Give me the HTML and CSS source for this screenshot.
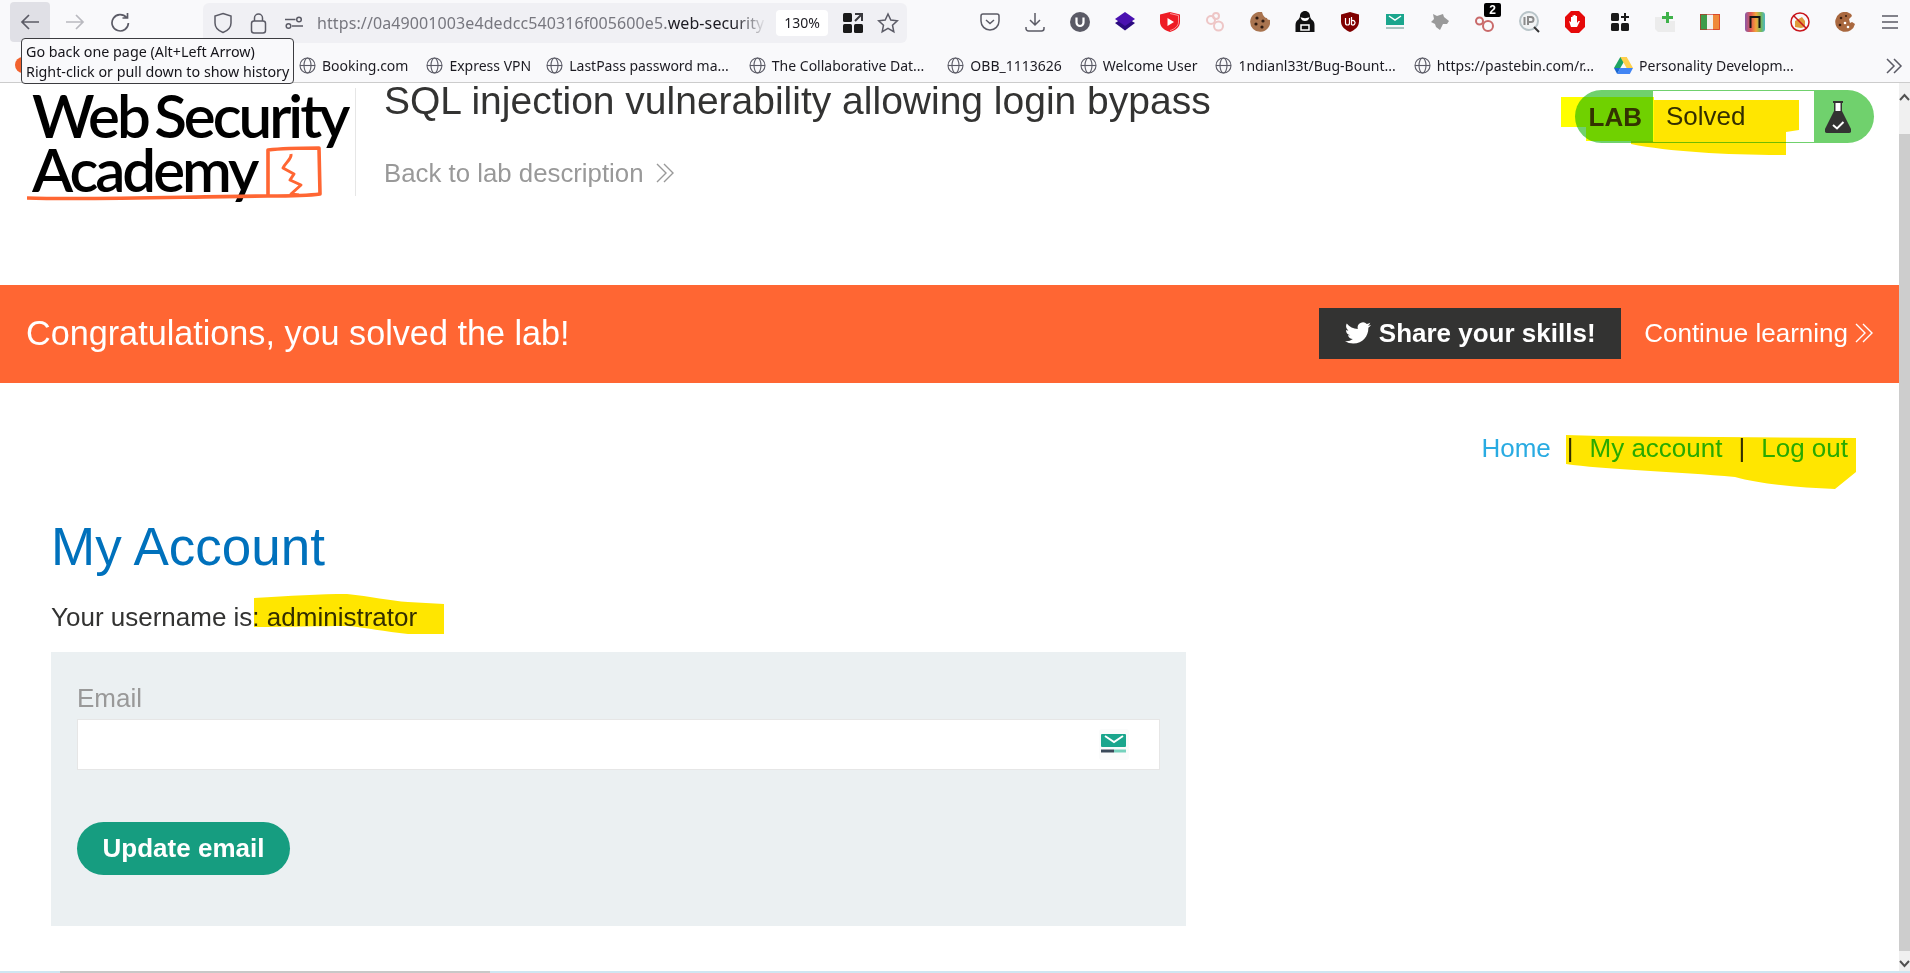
FILE: index.html
```html
<!DOCTYPE html>
<html lang="en">
<head>
<meta charset="utf-8">
<title>SQL injection vulnerability allowing login bypass</title>
<link rel="stylesheet" href="styles.css">
</head>
<body>
<header class="browser">
  <div class="toolbar">
    <div class="nav-buttons">
      <button class="tb-btn tb-active"><svg width="20" height="20" viewBox="0 0 20 20" class="ic-line"><path d="M19 10H2M9 3l-7 7 7 7"/></svg></button>
      <button class="tb-btn tb-dim"><svg width="20" height="20" viewBox="0 0 20 20" class="ic-line"><path d="M1 10h17M11 3l7 7-7 7"/></svg></button>
      <button class="tb-btn"><svg width="20" height="20" viewBox="0 0 20 20" class="ic-line"><path d="M16.5 5.5A8.2 8.2 0 1 0 18.4 11M17.500 1v5h-5"/></svg></button>
    </div>
    <div class="urlbar">
      <svg width="20" height="22" viewBox="0 0 20 22" class="ic-line ic-thin"><path d="M10 1.500l8 2.500v7c0 5-4 8-8 9.500-4-1.500-8-4.500-8-9.500V4z"/></svg>
      <svg width="17" height="22" viewBox="0 0 17 22" class="ic-line ic-thin"><rect x="1.500" y="9" width="14" height="12" rx="2.500"/><path d="M4.500 9V6a4 4 0 0 1 8 0v3"/></svg>
      <svg width="18" height="14" viewBox="0 0 18 14" class="ic-line ic-thin"><circle cx="3.500" cy="10" r="2.300"/><circle cx="14" cy="3.500" r="2.300"/><path d="M0 3.500h10.500M7 10h11"/></svg>
      <div class="url"><span>https://0a49001003e4dedcc540316f005600e5.</span><b>web-security</b></div>
      <span class="zoom-badge">130%</span>
      <svg width="20" height="20" viewBox="0 0 20 20" class="ic-fill"><rect x="0" y="0" width="9" height="9" rx="1.500"/><rect x="0" y="11" width="9" height="9" rx="1.500"/><rect x="11" y="11" width="9" height="9" rx="1.500"/><path d="M12 1h7v7M19 1l-7 7" fill="none" stroke="#3a3a3f" stroke-width="2"/></svg>
      <svg width="22" height="22" viewBox="0 0 22 22" class="ic-line ic-thin"><path d="M11 2l2.800 6 6.500.8-4.800 4.400 1.300 6.500-5.800-3.300-5.800 3.300 1.300-6.500L1.700 8.800 8.200 8z"/></svg>
    </div>
    <div class="extensions">
      <span class="ext"><svg width="20" height="20" viewBox="0 0 20 20" class="ic-line ic-thin"><path d="M3 2h14a2 2 0 0 1 2 2v5a9 9 0 0 1-18 0V4a2 2 0 0 1 2-2z"/><path d="M6 8l4 3.500L14 8"/></svg></span>
      <span class="ext"><svg width="20" height="20" viewBox="0 0 20 20" class="ic-line ic-thin"><path d="M10 1v12M5 8l5 5 5-5M1 15v1.500A2.500 2.500 0 0 0 3.500 19h13a2.500 2.500 0 0 0 2.500-2.500V15"/></svg></span>
      <span class="ext"><svg width="20" height="20" viewBox="0 0 20 20"><circle cx="10" cy="10" r="10" fill="#5b5b66"/><path d="M6.500 5.500v5a3.500 3.500 0 0 0 7 0v-5" fill="none" stroke="#fff" stroke-width="2.200"/></svg></span>
      <span class="ext"><svg width="20" height="20" viewBox="0 0 20 20"><path d="M10 5l10 6-10 7.500L0 11z" fill="#2b0a80"/><path d="M10 0l10 7-10 7L0 7z" fill="#4a12b0"/></svg></span>
      <span class="ext"><svg width="20" height="20" viewBox="0 0 20 20"><path d="M10 0l10 2.500v7.500c0 5-4.500 8.500-10 10C4.500 18.500 0 15 0 10V2.500z" fill="#ee1c25"/><path d="M10 1.500l8.500 2v6.500c0 4-3.800 7.200-8.500 8.500" fill="none" stroke="#ffb3b3" stroke-width=".8"/><path d="M7.500 6l6.500 4-6.500 4z" fill="#fff"/></svg></span>
      <span class="ext"><svg width="20" height="20" viewBox="0 0 20 20" fill="none" stroke="#eec6c6" stroke-width="2"><circle cx="6" cy="8" r="4"/><circle cx="11" cy="4" r="3"/><circle cx="13.500" cy="14" r="4.500"/></svg></span>
      <span class="ext"><svg width="20" height="20" viewBox="0 0 20 20"><path d="M12 0a10 10 0 1 0 8 8c-2 0-3-1-3-2-2 0-4-2-5-6z" fill="#a9744f"/><circle cx="7" cy="6" r="1.600" fill="#2d1a10"/><circle cx="13" cy="9" r="1.600" fill="#2d1a10"/><circle cx="6" cy="12" r="1.600" fill="#2d1a10"/><circle cx="12" cy="15" r="1.600" fill="#2d1a10"/></svg></span>
      <span class="ext"><svg width="20" height="22" viewBox="0 0 20 22"><path d="M10 0c3 0 5 2.500 5 5 0 1.500 1 2.500 1.500 3.500 2 1 3 3 3 5.500v7H.5v-7c0-2.500 1-4.500 3-5.500C4 7.500 5 6.500 5 5c0-2.500 2-5 5-5z" fill="#111"/><path d="M5.500 6c2 1.500 7 1.500 9 0-1 3-2 4-4.500 4S6.500 9 5.500 6z" fill="#fff"/><path d="M6 14h8v5H6z" fill="none" stroke="#fff" stroke-width="1.500"/></svg></span>
      <span class="ext"><svg width="18" height="20" viewBox="0 0 18 20"><path d="M9 0l9 2.500v7c0 5-4 8.500-9 10.500C4 18 0 14.500 0 9.500v-7z" fill="#800000"/><path d="M4.500 6v5a2 2 0 0 0 4 0V6M10.500 5v8M10.500 9a2.200 2.200 0 1 1 0 3.500" fill="none" stroke="#fff" stroke-width="1.200"/></svg></span>
      <span class="ext"><svg width="18" height="20" viewBox="0 0 18 20"><rect y="2" width="18" height="11" fill="#1ba68d"/><path d="M3 4l6 4 6-4" fill="none" stroke="#fff" stroke-width="1.500"/><rect y="15" width="18" height="2" fill="#a9c4c0"/></svg></span>
      <span class="ext"><svg width="20" height="20" viewBox="0 0 20 20"><path d="M3 2l4 2 6-2 1 3 5 4-2 3h-4l-3 6-4-3-1-3-4-2 3-3z" fill="#9a9a9a"/></svg></span>
      <span class="ext ext-badged"><svg width="20" height="20" viewBox="0 0 20 20" fill="none" stroke="#c96a6a" stroke-width="2"><circle cx="4.500" cy="9" r="3.500"/><circle cx="13" cy="14" r="5"/></svg><span class="badge">2</span></span>
      <span class="ext"><svg width="22" height="22" viewBox="0 0 22 22"><circle cx="10" cy="10" r="9" fill="#f1f3f4" stroke="#b8c4c8" stroke-width="2"/><path d="M15 16l5 5" stroke="#333" stroke-width="2"/><path d="M5.500 6v8M9 14V6h3a2.500 2.500 0 0 1 0 5H9" fill="none" stroke="#8a8a8a" stroke-width="2"/></svg></span>
      <span class="ext"><svg width="20" height="22" viewBox="0 0 20 22"><path d="M6 0h8l6 6v10l-6 6H6l-6-6V6z" fill="#e60a0a"/><path d="M6 16l-2-6 2 1V6h1.500v4V4.500H9V10V4h1.500v6V5H12v7l1.500-2H15l-3 6z" fill="#fff"/></svg></span>
      <span class="ext"><svg width="18" height="18" viewBox="0 0 18 18" fill="#1a1a1a"><rect width="8" height="8" rx="1.500"/><rect y="10" width="8" height="8" rx="1.500"/><rect x="10" y="10" width="8" height="8" rx="1.500"/><path d="M13 0h2v3h3v2h-3v3h-2V5h-3V3h3z"/></svg></span>
      <span class="ext"><svg width="20" height="20" viewBox="0 0 20 20"><path d="M0 5h12v4h8v11H3l-3-3z" fill="#ececec"/><path d="M11 0h3v4h4v3h-4v4h-3V7H7V4h4z" fill="#3fb24a"/></svg></span>
      <span class="ext"><svg width="20" height="16" viewBox="0 0 20 16"><rect width="7" height="16" fill="#3e9c4a"/><rect x="7" width="6" height="16" fill="#f2f2ee"/><rect x="13" width="7" height="16" fill="#ef8a3a"/><rect x=".5" y=".5" width="19" height="15" fill="none" stroke="#c22" stroke-width=".6"/></svg></span>
      <span class="ext"><svg width="20" height="20" viewBox="0 0 20 20"><rect width="20" height="20" rx="3" fill="url(#rainbow)"/><defs><linearGradient id="rainbow"><stop offset="0" stop-color="#8c5aa8"/><stop offset=".3" stop-color="#e0574f"/><stop offset=".55" stop-color="#f2a53a"/><stop offset=".8" stop-color="#74b95a"/><stop offset="1" stop-color="#4db6c6"/></linearGradient></defs><path d="M5.500 16V5h9v11" fill="none" stroke="#141414" stroke-width="2"/></svg></span>
      <span class="ext"><svg width="20" height="20" viewBox="0 0 20 20"><path d="M5 9l7-4 3 4v6l-4 1-6-1z" fill="#e09a3c"/><circle cx="10" cy="10" r="9" fill="none" stroke="#c8151b" stroke-width="1.500"/><path d="M3.500 3.500l13 13" stroke="#c8151b" stroke-width="1.500"/></svg></span>
      <span class="ext"><svg width="20" height="20" viewBox="0 0 20 20"><path d="M12 0a10 10 0 1 0 8 12l-3-2-2 1-1-4 3-3-1-2z" fill="#a9683f"/><circle cx="6" cy="6" r="1.300" fill="#3a1d0d"/><circle cx="11" cy="4" r="1" fill="#3a1d0d"/><circle cx="5" cy="13" r="1.300" fill="#3a1d0d"/><circle cx="10" cy="11" r="1.300" fill="#fff"/><circle cx="13" cy="15" r="1.300" fill="#fff"/></svg></span>
      <span class="ext"><svg width="18" height="14" viewBox="0 0 18 14" class="ic-line"><path d="M1 1h16M1 7h16M1 13h16"/></svg></span>
    </div>
  </div>
  <div class="bookmarks">
    <span class="firefox-dot"></span>
    <a class="bm bm-first"><svg width="17" height="17" viewBox="0 0 17 17" class="globe"><circle cx="8.500" cy="8.500" r="7.500"/><ellipse cx="8.500" cy="8.500" rx="3.500" ry="7.500"/><path d="M1 8.500h15"/></svg>Booking.com</a>
    <a class="bm bm-tight"><svg width="17" height="17" viewBox="0 0 17 17" class="globe"><circle cx="8.500" cy="8.500" r="7.500"/><ellipse cx="8.500" cy="8.500" rx="3.500" ry="7.500"/><path d="M1 8.500h15"/></svg>Express VPN</a>
    <a class="bm bm-loose"><svg width="17" height="17" viewBox="0 0 17 17" class="globe"><circle cx="8.500" cy="8.500" r="7.500"/><ellipse cx="8.500" cy="8.500" rx="3.500" ry="7.500"/><path d="M1 8.500h15"/></svg>LastPass password ma...</a>
    <a class="bm bm-wide"><svg width="17" height="17" viewBox="0 0 17 17" class="globe"><circle cx="8.500" cy="8.500" r="7.500"/><ellipse cx="8.500" cy="8.500" rx="3.500" ry="7.500"/><path d="M1 8.500h15"/></svg>The Collaborative Dat...</a>
    <a class="bm"><svg width="17" height="17" viewBox="0 0 17 17" class="globe"><circle cx="8.500" cy="8.500" r="7.500"/><ellipse cx="8.500" cy="8.500" rx="3.500" ry="7.500"/><path d="M1 8.500h15"/></svg>OBB_1113626</a>
    <a class="bm"><svg width="17" height="17" viewBox="0 0 17 17" class="globe"><circle cx="8.500" cy="8.500" r="7.500"/><ellipse cx="8.500" cy="8.500" rx="3.500" ry="7.500"/><path d="M1 8.500h15"/></svg>Welcome User</a>
    <a class="bm"><svg width="17" height="17" viewBox="0 0 17 17" class="globe"><circle cx="8.500" cy="8.500" r="7.500"/><ellipse cx="8.500" cy="8.500" rx="3.500" ry="7.500"/><path d="M1 8.500h15"/></svg>1ndianl33t/Bug-Bount...</a>
    <a class="bm bm-loose"><svg width="17" height="17" viewBox="0 0 17 17" class="globe"><circle cx="8.500" cy="8.500" r="7.500"/><ellipse cx="8.500" cy="8.500" rx="3.500" ry="7.500"/><path d="M1 8.500h15"/></svg>https://pastebin.com/r...</a>
    <a class="bm"><svg width="19" height="17" viewBox="0 0 19 17"><path d="M6.300 0h6.400L6.300 11H0z" fill="#1fa463"/><path d="M12.700 0L19 11h-6.400L6.300 0z" fill="#ffd04b"/><path d="M3.200 17L6.300 11H19l-3.200 6z" fill="#4285f4"/><path d="M0 11h6.300L3.200 17z" fill="#1967d2"/></svg>Personality Developm...</a>
    <svg class="bm-more" width="18" height="16" viewBox="0 0 18 16" fill="none" stroke="#5b5b66" stroke-width="1.500"><path d="M2 1l7 7-7 7M9 1l7 7-7 7"/></svg>
  </div>
  <div class="tooltip">Go back one page (Alt+Left Arrow)<br>Right-click or pull down to show history</div>
</header>

<div class="viewport">
  <div class="page">
    <section class="lab-header">
      <div class="logo">
        <span class="logo-line">Web Security</span>
        <span class="logo-line">Academy</span>
        <svg class="logo-mark" width="296" height="56" viewBox="0 0 296 56" fill="none" stroke="#ff6633" stroke-linejoin="round"><path d="M0 52c60 2 150-1 241-2V4c17-2 34-2 51-2l1 46c-14 2-36 2-52 2" stroke-width="3.600"/><path d="M264 8c1 5-6 9-8 14l11 6-4 6 11 5-10 9 8 1" stroke-width="3"/></svg>
      </div>
      <div class="lab-title">
        <h2 class="lab-name">SQL injection vulnerability allowing login bypass</h2>
        <a class="lab-back">Back to lab description <svg width="20" height="20" viewBox="0 0 20 20" fill="none" stroke="#999" stroke-width="1.400"><path d="M2 1l9 9-9 9M9 1l9 9-9 9"/></svg></a>
      </div>
      <div class="lab-status">
        <span class="lab-tag">LAB</span>
        <span class="lab-state">Solved</span>
        <span class="lab-flask"><svg width="26" height="32" viewBox="0 0 26 32"><path d="M8 0h10v2h-1v8l9 18a2.500 2.500 0 0 1-2 4H2a2.500 2.500 0 0 1-2-4l9-18V2H8z" fill="#333332"/><rect x="10.500" y="2" width="5" height="8" fill="#fff"/><path d="M8 24l4 3.500L18.500 21" fill="none" stroke="#fff" stroke-width="2"/></svg></span>
      </div>
    </section>

    <section class="banner">
      <h4 class="banner-text">Congratulations, you solved the lab!</h4>
      <a class="share"><svg width="26" height="26" viewBox="0 0 24 24" fill="#fff"><path d="M23.953 4.570a10 10 0 0 1-2.825.775 4.958 4.958 0 0 0 2.163-2.723c-.951.555-2.005.959-3.127 1.184a4.920 4.920 0 0 0-8.384 4.482C7.690 8.095 4.067 6.130 1.640 3.162a4.822 4.822 0 0 0-.666 2.475c0 1.710.870 3.213 2.188 4.096a4.904 4.904 0 0 1-2.228-.616v.060a4.923 4.923 0 0 0 3.946 4.827 4.996 4.996 0 0 1-2.212.085 4.936 4.936 0 0 0 4.604 3.417 9.867 9.867 0 0 1-6.102 2.105c-.390 0-.779-.023-1.170-.067a13.995 13.995 0 0 0 7.557 2.209c9.053 0 13.998-7.496 13.998-13.985 0-.210 0-.420-.015-.630A9.935 9.935 0 0 0 24 4.590z"/></svg>Share your skills!</a>
      <a class="continue">Continue learning <svg width="20" height="20" viewBox="0 0 20 20" fill="none" stroke="#fff" stroke-width="1.400"><path d="M2 1l9 9-9 9M9 1l9 9-9 9"/></svg></a>
    </section>

    <nav class="site-nav">
      <a class="link">Home</a><span class="sep">|</span><a class="link link-marked">My account</a><span class="sep">|</span><a class="link link-marked">Log out</a>
    </nav>

    <main class="content">
      <h1 class="heading">My Account</h1>
      <p class="username">Your username is: administrator</p>
      <form class="email-form">
        <label class="email-label">Email</label>
        <div class="email-input">
          <span class="tempmail"><svg width="26" height="21" viewBox="0 0 26 21"><rect width="25" height="13" rx="1" fill="#1ba68d"/><path d="M4 2l9 6 9-6" fill="none" stroke="#fff" stroke-width="2"/><rect y="15.500" width="13" height="3" fill="#3a4a5a"/><rect x="13" y="15.500" width="12" height="3" fill="#76d2bd"/></svg></span>
        </div>
        <button type="button" class="update">Update email</button>
      </form>
    </main>
  </div>
  <aside class="scrollbar">
    <svg class="sb-arrow" width="11" height="8" viewBox="0 0 11 8" fill="none" stroke="#505050" stroke-width="2"><path d="M1 7l4.500-5L10 7"/></svg>
    <div class="sb-thumb"></div>
    <svg class="sb-arrow" width="11" height="8" viewBox="0 0 11 8" fill="none" stroke="#505050" stroke-width="2"><path d="M1 1l4.500 5L10 1"/></svg>
  </aside>
</div>
<div class="bottom-strip"><span class="bottom-grey"></span></div>

<svg class="marks" width="1910" height="973" viewBox="0 0 1910 973">
  <path class="mark-lime" d="M1561 97H1654V141H1586V127H1561Z"/>
  <path class="mark" d="M1654 100H1799V130L1786 132V155C1730 155 1670 152 1631 144V141H1654Z"/>
  <path class="mark" d="M1566 435L1600 436 1856 438V472L1835 489C1800 488 1760 484 1735 477 1680 472 1600 469 1566 464Z"/>
  <path class="mark" d="M254 598C290 596 320 594 347 594 370 596 390 601 408 602L444 604V634H408C385 632 365 627 347 626 320 626 290 627 254 627Z"/>
</svg>
</body>
</html>
```

FILE: styles.css
```css
* { box-sizing: border-box; }
html, body { margin: 0; height: 100%; }
body {
  width: 1910px;
  height: 973px;
  overflow: hidden;
  display: flex;
  flex-direction: column;
  position: relative;
  background: #fff;
  color: #333332;
  font-family: "Liberation Sans", Arial, sans-serif;
}

/* Browser chrome */
.browser {
  flex: none;
  height: 83px;
  background: #f9f9fb;
  border-bottom: 1px solid #ccc;
  position: relative;
  font-family: "Noto Sans", sans-serif;
}
.toolbar {
  height: 44px;
  display: flex;
  align-items: flex-start;
  padding: 2px 0 0 10px;
}
.nav-buttons { display: flex; gap: 5px; width: 193px; flex: none; }
.tb-btn {
  width: 40px;
  height: 40px;
  border: 0;
  border-radius: 4px;
  padding: 0;
  background: none;
  display: flex;
  align-items: center;
  justify-content: center;
}
.tb-active { background: #e0e0e6; }
.tb-dim svg { opacity: .4; }
.ic-line { fill: none; stroke: #5b5b66; stroke-width: 1.700; flex: none; }
.ic-thin { stroke-width: 1.500; }
.ic-fill { fill: #1a1a1a; flex: none; }

.urlbar {
  flex: none;
  width: 704px;
  height: 40px;
  margin-top: 1px;
  background: #f0f0f4;
  border-radius: 6px;
  display: flex;
  align-items: center;
  padding-left: 10px;
}
.urlbar svg:nth-child(2) { margin-left: 17px; }
.urlbar svg:nth-child(3) { margin-left: 18px; }
.url {
  width: 449px;
  margin-left: 14px;
  overflow: hidden;
  white-space: nowrap;
  font-size: 16px;
  color: #77777f;
  letter-spacing: .1px;
  -webkit-mask-image: linear-gradient(90deg, #000 93%, transparent);
  mask-image: linear-gradient(90deg, #000 93%, transparent);
}
.url b { font-weight: 400; color: #1c1b22; }
.zoom-badge {
  width: 52px;
  height: 26px;
  margin: 0 15px 0 10px;
  background: #fff;
  border-radius: 4px;
  font-size: 14px;
  line-height: 26px;
  text-align: center;
  color: #1c1b22;
}
.urlbar .ic-fill + svg { margin-left: 14px; }

.extensions {
  flex: none;
  margin-left: 60px;
  display: flex;
  align-items: center;
  height: 40px;
}
.ext {
  width: 45px;
  height: 40px;
  flex: none;
  display: flex;
  align-items: center;
  justify-content: center;
  position: relative;
}
.badge {
  position: absolute;
  top: 1px;
  left: 22px;
  width: 17px;
  height: 14px;
  background: #000;
  border-radius: 2px;
  color: #fff;
  font: 700 12px/14px "Liberation Sans", sans-serif;
  text-align: center;
}

.bookmarks {
  height: 38px;
  padding-top: 4px;
  display: flex;
  align-items: center;
  font-size: 14px;
  color: #1c1b22;
  padding-left: 15px;
  position: relative;
}
.firefox-dot {
  width: 16px;
  height: 16px;
  border-radius: 50%;
  background: #f2622e;
  flex: none;
}
.bm {
  display: flex;
  align-items: center;
  gap: 6px;
  white-space: nowrap;
  margin-right: 18px;
  flex: none;
}
.bm-first { margin-left: 268px; }
.bm-tight { margin-right: 15px; }
.bm-loose { margin-right: 20px; }
.bm-wide { margin-right: 23px; }
.globe { fill: none; stroke: #5b5b66; stroke-width: 1.100; flex: none; }
.bm-more { position: absolute; right: 7px; top: 14px; }

.tooltip {
  position: absolute;
  left: 21px;
  top: 38px;
  width: 273px;
  height: 46px;
  padding: 3px 4px 0;
  background: #f9f9fb;
  border: 1px solid #3c3c40;
  border-radius: 4px;
  font-size: 14.300px;
  line-height: 20px;
  color: #15141a;
  white-space: nowrap;
  z-index: 5;
}

/* Page */
.viewport { flex: 1; display: flex; min-height: 0; }
.page { flex: 1; min-width: 0; }

.lab-header {
  height: 202px;
  display: flex;
  align-items: flex-start;
  padding-left: 29px;
}
.logo {
  width: 327px;
  height: 108px;
  margin-top: 5px;
  border-right: 1px solid #e6e6e6;
  position: relative;
  font-family: Lato, sans-serif;
  font-size: 60px;
  font-weight: 600;
  letter-spacing: -3px;
  word-spacing: -5.500px;
  line-height: 54px;
  color: #000;
}
.logo-line { display: block; white-space: nowrap; padding-left: 3px; }
.logo-mark { position: absolute; left: -2px; top: 58px; }

.lab-title { margin-left: 28px; flex: 1; }
.lab-name {
  margin: 0;
  font-size: 39px;
  font-weight: 400;
  line-height: 36px;
  color: #333332;
}
.lab-back {
  display: flex;
  align-items: center;
  gap: 11px;
  margin-top: 35px;
  font-size: 25.800px;
  line-height: 38px;
  color: #999;
}
.lab-status {
  flex: none;
  width: 299px;
  height: 53px;
  margin: 7px 25px 0 0;
  padding: 1px 0;
  background: #70d16d;
  border-radius: 27px;
  display: flex;
  overflow: hidden;
}
.lab-tag {
  width: 78px;
  font-size: 26px;
  font-weight: 700;
  line-height: 53px;
  text-align: right;
  padding-right: 11px;
  color: #333332;
}
.lab-state {
  width: 161px;
  background: #fff;
  font-size: 26px;
  line-height: 51px;
  padding-left: 13px;
  color: #333332;
}
.lab-flask { flex: 1; display: flex; align-items: center; justify-content: center; padding-right: 12px; }

.banner {
  height: 98px;
  display: flex;
  align-items: center;
  background: #ff6633;
  color: #fff;
  padding: 0 0 2px 26px;
}
.banner-text {
  margin: 0;
  flex: 1;
  font-size: 34.200px;
  font-weight: 400;
}
.share {
  width: 302px;
  height: 51px;
  display: flex;
  align-items: center;
  justify-content: center;
  gap: 8px;
  background: #333332;
  font-size: 26px;
  font-weight: 700;
}
.continue {
  display: flex;
  align-items: center;
  gap: 6px;
  margin: 0 25px 0 23px;
  font-size: 26px;
}

.site-nav {
  height: 133px;
  padding: 50px 51px 0 0;
  display: flex;
  justify-content: flex-end;
  font-size: 26px;
  line-height: 30px;
}
.link { color: #29abe2; }
.link-marked { color: #29bde2; }
.sep { margin: 0 16px; color: #333332; }

.content { padding-left: 51px; width: 1186px; }
.heading {
  margin: 0;
  font-size: 53px;
  font-weight: 400;
  line-height: 62px;
  color: #0071bc;
}
.username {
  margin: 24px 0 0;
  font-size: 26px;
  line-height: 30px;
}
.email-form {
  margin-top: 20px;
  height: 274px;
  padding: 31px 26px 0;
  background: #ebf0f2;
  display: flex;
  flex-direction: column;
  align-items: flex-start;
}
.email-label {
  font-size: 26px;
  line-height: 30px;
  color: #999;
}
.email-input {
  width: 100%;
  height: 51px;
  margin-top: 6px;
  background: #fff;
  border: 1px solid #e6e6e6;
  display: flex;
  align-items: center;
  justify-content: flex-end;
  padding-right: 30px;
}
.tempmail {
  display: flex;
  padding: 5px 2px;
  background: #fafbfb;
  border-radius: 3px;
}
.update {
  width: 213px;
  height: 53px;
  margin-top: 52px;
  border: 0;
  border-radius: 27px;
  background: #169d80;
  color: #fff;
  font-family: inherit;
  font-size: 26px;
  font-weight: 700;
  padding: 0;
}

.scrollbar {
  flex: none;
  width: 11px;
  background: #f0f0f0;
  display: flex;
  flex-direction: column;
  align-items: center;
  padding-top: 10px;
}
.sb-arrow { flex: none; }
.sb-thumb { width: 11px; height: 817px; margin: 33px 0 9px; background: #cdcdcd; }

.bottom-strip {
  flex: none;
  height: 2px;
  background: #cfe6f2;
  padding-left: 60px;
}
.bottom-grey { display: block; width: 430px; height: 2px; background: #c8c8c8; }

/* Hand-drawn highlighter marks over the screenshot */
.marks {
  position: absolute;
  inset: 0;
  mix-blend-mode: multiply;
  pointer-events: none;
  z-index: 10;
}
.mark { fill: #ffe600; }
.mark-lime { fill: #ffff00; }
```
